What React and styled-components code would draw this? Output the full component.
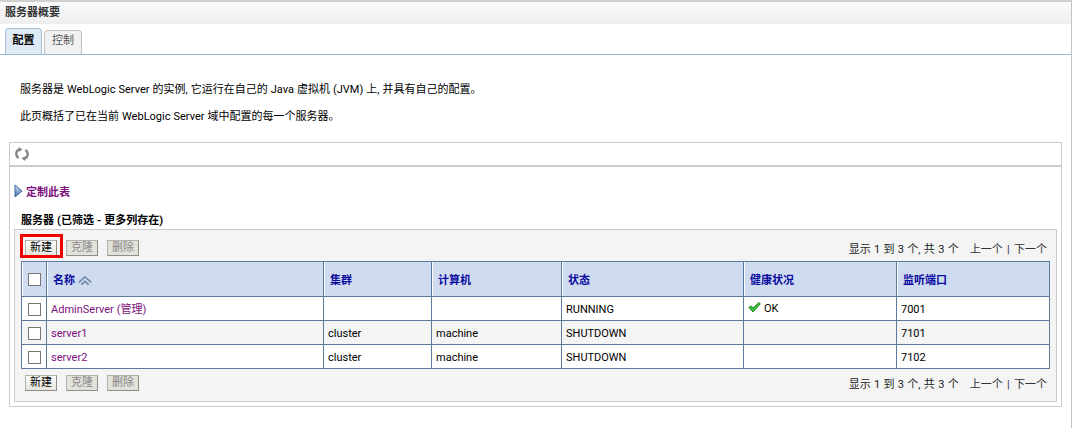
import React from 'react';
import styled, { createGlobalStyle, css } from 'styled-components';

const GlobalStyle = createGlobalStyle`
  html, body {
    margin: 0;
    padding: 0;
    background: #fff;
  }
  body {
    font-family: Roboto, "Noto Sans CJK SC", sans-serif;
    font-size: 11px;
    word-spacing: 0.3px;
    color: #000;
  }
`;

const servers = [
  { name: 'AdminServer', suffix: ' (管理)', cluster: '', machine: '', state: 'RUNNING', health: 'OK', port: '7001' },
  { name: 'server1', cluster: 'cluster', machine: 'machine', state: 'SHUTDOWN', health: '', port: '7101' },
  { name: 'server2', cluster: 'cluster', machine: 'machine', state: 'SHUTDOWN', health: '', port: '7102' },
];

const columns = [
  { label: '集群', width: 108 },
  { label: '计算机', width: 130 },
  { label: '状态', width: 182 },
  { label: '健康状况', width: 153 },
  { label: '监听端口', width: 153 },
];

function RefreshIcon() {
  return (
    <svg width="14" height="14" viewBox="0 0 14 14" fill="none">
      <path d="M5 2.4 C2.4 2.8 1.3 4.8 1.3 6.8 C1.3 8.6 2.2 10.2 3.6 11" stroke="#858585" strokeWidth="2.4" />
      <path d="M3.8 0 L7.4 2.4 L3.8 5 Z" fill="#858585" />
      <path d="M9 11.6 C11.6 11.2 12.7 9.2 12.7 7.2 C12.7 5.4 11.8 3.8 10.4 3" stroke="#858585" strokeWidth="2.4" />
      <path d="M10.2 9 L6.6 11.6 L10.2 14 Z" fill="#858585" />
    </svg>
  );
}

function ArrowIcon() {
  return (
    <svg width="9" height="14" viewBox="0 0 9 14">
      <defs>
        <linearGradient id="arrowFill" x1="0" y1="0" x2="0" y2="1">
          <stop offset="0" stopColor="#dfe8f5" />
          <stop offset="1" stopColor="#3b6cb0" />
        </linearGradient>
      </defs>
      <path d="M1 1 L8 7 L1 13 Z" fill="url(#arrowFill)" stroke="#3f6aa5" strokeWidth="1" />
    </svg>
  );
}

function SortIcon() {
  return (
    <SortSvg width="14" height="10" viewBox="0 0 14 10" fill="none">
      <path d="M0.8 6.4 L7 1 L13.2 6.4" stroke="#6f86a8" strokeWidth="1.6" />
      <path d="M3.4 8.6 L7 5.4 L10.6 8.6" stroke="#6f86a8" strokeWidth="1.6" />
    </SortSvg>
  );
}

function CheckIcon() {
  return (
    <svg width="13" height="11" viewBox="0 0 13 11">
      <path d="M0.8 5.6 L3 3.8 L5 6 L10.8 0.6 L12.4 1.8 L5 10 Z" fill="#35c42f" stroke="#14691a" strokeWidth="0.8" />
    </svg>
  );
}

function Actions() {
  return (
    <ActionRow>
      <ActionButton>新建</ActionButton>
      <ActionButton disabled>克隆</ActionButton>
      <ActionButton disabled>删除</ActionButton>
    </ActionRow>
  );
}

function Pager() {
  return (
    <PagerText>
      <span>显示 1 到 3 个, 共 3 个</span>
      <PagerLinks>上一个 | 下一个</PagerLinks>
    </PagerText>
  );
}

export default function App() {
  return (
    <Page>
      <GlobalStyle />
      <TitleBar>服务器概要</TitleBar>
      <Tabs>
        <Tab $active>配置</Tab>
        <Tab>控制</Tab>
      </Tabs>
      <Intro>
        <p>服务器是 WebLogic Server 的实例, 它运行在自己的 Java 虚拟机 (JVM) 上, 并具有自己的配置。</p>
        <p>此页概括了已在当前 WebLogic Server 域中配置的每一个服务器。</p>
      </Intro>
      <OuterPanel>
        <Toolbar>
          <RefreshIcon />
        </Toolbar>
        <Customize>
          <ArrowIcon />
          <span>定制此表</span>
        </Customize>
        <TableTitle>服务器 (已筛选 - 更多列存在)</TableTitle>
        <InnerPanel>
          <ControlRow $top>
            <Actions />
            <Pager />
            <Highlight />
          </ControlRow>
          <Table>
            <colgroup>
              <col style={{ width: 25 }} />
              <col style={{ width: 277 }} />
              {columns.map((c) => (
                <col key={c.label} style={{ width: c.width }} />
              ))}
            </colgroup>
            <thead>
              <tr>
                <HeadCell $center><Check /></HeadCell>
                <HeadCell>
                  <HeadLabel>名称</HeadLabel> <SortIcon />
                </HeadCell>
                {columns.map((c) => (
                  <HeadCell key={c.label}><HeadLabel>{c.label}</HeadLabel></HeadCell>
                ))}
              </tr>
            </thead>
            <tbody>
              {servers.map((s, i) => (
                <Row key={s.name} $odd={i % 2 === 1}>
                  <Cell $center><Check /></Cell>
                  <Cell>
                    <ServerLink>{s.name}{s.suffix}</ServerLink>
                  </Cell>
                  <Cell>{s.cluster}</Cell>
                  <Cell>{s.machine}</Cell>
                  <Cell>{s.state}</Cell>
                  <Cell>
                    {s.health && (
                      <Health><CheckIcon /><span>{s.health}</span></Health>
                    )}
                  </Cell>
                  <Cell>{s.port}</Cell>
                </Row>
              ))}
            </tbody>
          </Table>
          <ControlRow>
            <Actions />
            <Pager />
          </ControlRow>
        </InnerPanel>
      </OuterPanel>
    </Page>
  );
}

const Page = styled.div`
  width: 1072px;
  height: 428px;
  overflow: hidden;
  border-right: 1px solid #c4c4c4;
  border-top: 2px solid #d0d0d0;
  box-sizing: border-box;
`;

const TitleBar = styled.div`
  height: 22px;
  line-height: 22px;
  padding-left: 5px;
  font-weight: bold;
  color: #333;
  background: linear-gradient(#fbfbfb, #eeeeee);
`;

const Tabs = styled.div`
  display: flex;
  align-items: flex-end;
  gap: 2px;
  height: 30px;
  padding-left: 5px;
  border-bottom: 1px solid #9db8d2;
`;

const Tab = styled.div`
  box-sizing: border-box;
  display: flex;
  align-items: center;
  justify-content: center;
  border: 1px solid #c2c2c2;
  border-bottom: 0;
  border-radius: 4px 4px 0 0;
  width: ${(p) => (p.$active ? '37px' : '38px')};
  height: ${(p) => (p.$active ? '26px' : '24px')};
  padding-bottom: ${(p) => (p.$active ? '6px' : '8px')};
  color: ${(p) => (p.$active ? '#000' : '#555')};
  font-weight: ${(p) => (p.$active ? 'bold' : 'normal')};
  background: ${(p) => (p.$active ? '#dfeaf5' : '#f1f1f1')};
  ${(p) => p.$active && css`border-color: #a6c0d8;`}
`;

const Intro = styled.div`
  height: 87px;
  padding: 28px 0 0 20px;
  box-sizing: border-box;
  p {
    margin: 0 0 13px;
    line-height: 14px;
  }
`;

const OuterPanel = styled.div`
  box-sizing: border-box;
  width: 1053px;
  height: 265px;
  margin-left: 9px;
  border: 1px solid #cccccc;
  padding: 0 4px 4px;
  display: flex;
  flex-direction: column;
`;

const Toolbar = styled.div`
  height: 22px;
  margin: 0 -4px;
  padding-left: 5px;
  display: flex;
  align-items: center;
  border-bottom: 2px solid #cccccc;
`;

const Customize = styled.div`
  display: flex;
  align-items: center;
  gap: 3px;
  height: 14px;
  margin-top: 17px;
  font-weight: bold;
  color: #7b0f7b;
`;

const TableTitle = styled.div`
  margin: 16px 0 1px 7px;
  height: 14px;
  line-height: 14px;
  font-weight: bold;
`;

const InnerPanel = styled.div`
  flex: 1;
  border: 1px solid #cccccc;
  background: #f4f4f4;
  padding: 0 6px;
`;

const ControlRow = styled.div`
  position: relative;
  display: flex;
  align-items: center;
  justify-content: space-between;
  box-sizing: border-box;
  height: ${(p) => (p.$top ? '31px' : '30px')};
  padding: ${(p) => (p.$top ? '4px 3px 0 4px' : '0 3px 2px 4px')};
`;

const ActionRow = styled.div`
  display: flex;
  gap: 9px;
`;

const ActionButton = styled.button`
  box-sizing: border-box;
  width: 32px;
  height: 16px;
  padding: 0;
  font: inherit;
  line-height: 12px;
  color: ${(p) => (p.disabled ? '#888' : '#000')};
  background: ${(p) => (p.disabled ? '#e2e2da' : 'linear-gradient(#fdfdfb, #e6e6de)')};
  border: 1px solid #b3b3ab;
  border-right-color: #8f8f88;
  border-bottom-color: #8f8f88;
`;

const Highlight = styled.div`
  position: absolute;
  left: -1px;
  top: 4px;
  width: 43px;
  height: 24px;
  box-sizing: border-box;
  border: 3px solid #f00000;
  pointer-events: none;
`;

const PagerText = styled.div`
  display: flex;
  gap: 11px;
  color: #222;
  word-spacing: 0.6px;
`;

const PagerLinks = styled.span`
  color: #333;
  word-spacing: 1.6px;
`;

const Table = styled.table`
  table-layout: fixed;
  border-collapse: collapse;
  width: 1028px;
  background: #fff;
  border: 1px solid #5a7a9e;
`;

const HeadCell = styled.th`
  height: 34px;
  padding: 0 6px;
  text-align: ${(p) => (p.$center ? 'center' : 'left')};
  background: #cfdcef;
  border: 1px solid #5a7a9e;
  border-top: 0;
  box-shadow: inset 1px 0 0 #fff;
  font-weight: bold;
`;

const HeadLabel = styled.span`
  color: #0a0aa0;
`;

const SortSvg = styled.svg`
  vertical-align: middle;
`;

const Row = styled.tr`
  background: ${(p) => (p.$odd ? '#f4f4f4' : '#fff')};
`;

const Cell = styled.td`
  height: 21px;
  padding: 2px 4px 0;
  border: 1px solid #5a7a9e;
  line-height: 14px;
  white-space: nowrap;
  text-align: ${(p) => (p.$center ? 'center' : 'left')};
`;

const Check = styled.span`
  display: inline-block;
  box-sizing: border-box;
  width: 13px;
  height: 13px;
  vertical-align: middle;
  border: 1px solid #767676;
  background: #fff;
`;

const ServerLink = styled.span`
  color: #7b0f7b;
`;

const Health = styled.span`
  display: inline-flex;
  align-items: center;
  gap: 3px;
  svg {
    margin-top: -3px;
  }
`;
